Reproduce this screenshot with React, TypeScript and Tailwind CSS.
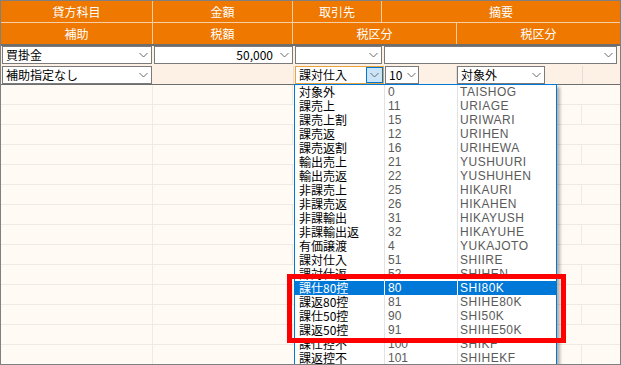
import React from "react";

const jp = { fontFamily: '"Noto Sans CJK JP", "Liberation Sans", sans-serif' };

const items: [string, string, string][] = [
  ["対象外", "0", "TAISHOG"],
  ["課売上", "11", "URIAGE"],
  ["課売上割", "15", "URIWARI"],
  ["課売返", "12", "URIHEN"],
  ["課売返割", "16", "URIHEWA"],
  ["輸出売上", "21", "YUSHUURI"],
  ["輸出売返", "22", "YUSHUHEN"],
  ["非課売上", "25", "HIKAURI"],
  ["非課売返", "26", "HIKAHEN"],
  ["非課輸出", "31", "HIKAYUSH"],
  ["非課輸出返", "32", "HIKAYUHE"],
  ["有価譲渡", "4", "YUKAJOTO"],
  ["課対仕入", "51", "SHIIRE"],
  ["課対仕返", "52", "SHIHEN"],
  ["課仕80控", "80", "SHI80K"],
  ["課返80控", "81", "SHIHE80K"],
  ["課仕50控", "90", "SHI50K"],
  ["課返50控", "91", "SHIHE50K"],
  ["課仕控不", "100", "SHIKF"],
  ["課返控不", "101", "SHIHEKF"],
];

function Chevron() {
  return (
    <svg width="9" height="6" viewBox="0 0 9 6" className="shrink-0">
      <polyline points="0.5,1 4.5,5 8.5,1" fill="none" stroke="#6b6b6b" strokeWidth="1" />
    </svg>
  );
}

function Combo({
  w,
  ml,
  text,
  right,
  focused,
}: {
  w: string;
  ml: string;
  text?: string;
  right?: boolean;
  focused?: boolean;
}) {
  return (
    <div
      className={`${w} ${ml} h-[18px] flex items-center bg-white border ${
        focused ? "border-[#e8a33c]" : "border-[#7a7a7a]"
      }`}
    >
      <span className={`flex-1 text-[12px] leading-none text-black px-[3px] whitespace-nowrap ${right ? "text-right" : ""}`}>
        {text}
      </span>
      {focused ? (
        <div className="w-[17px] h-full bg-[#cce4f7] border border-[#0078d7] flex items-center justify-center">
          <Chevron />
        </div>
      ) : (
        <div className="w-[16px] flex items-center justify-center">
          <Chevron />
        </div>
      )}
    </div>
  );
}

export default function App() {
  return (
    <div className="w-[621px] h-[365px] relative overflow-hidden border border-[#808080] bg-[#fffaf3]" style={jp}>
      {/* header */}
      <div className="flex h-[22px] bg-[#ee7800] text-white text-[12px] border-b border-[#f6cfa6]">
        <div className="w-[152px] flex items-center justify-center border-r border-[#f6cfa6]">貸方科目</div>
        <div className="w-[140px] flex items-center justify-center border-r border-[#f6cfa6]">金額</div>
        <div className="w-[89px] flex items-center justify-center border-r border-[#f6cfa6]">取引先</div>
        <div className="flex-1 flex items-center justify-center">摘要</div>
      </div>
      <div className="flex h-[21px] bg-[#ee7800] text-white text-[12px]">
        <div className="w-[152px] flex items-center justify-center border-r border-[#f6cfa6]">補助</div>
        <div className="w-[140px] flex items-center justify-center border-r border-[#f6cfa6]">税額</div>
        <div className="w-[164px] flex items-center justify-center border-r border-[#f6cfa6]">税区分</div>
        <div className="flex-1 flex items-center justify-center">税区分</div>
      </div>
      <div className="h-[2px] bg-[#6e6e6e]" />

      {/* input rows */}
      <div className="flex h-[19px] bg-[#fdf1e6]">
        <Combo w="w-[150px]" ml="ml-[1px]" text="買掛金" />
        <Combo w="w-[139px]" ml="ml-[2px]" text="50,000" right />
        <Combo w="w-[87px]" ml="ml-[2px]" />
        <Combo w="w-[233px]" ml="ml-[2px]" />
      </div>
      <div className="flex h-[19px] bg-[#fdf1e6] pt-[1px]">
        <Combo w="w-[150px]" ml="ml-[1px]" text="補助指定なし" />
        <div className="w-[142px] border-r border-[#e6ded6]" />
        <Combo w="w-[89px]" ml="ml-[1px]" text="課対仕入" focused />
        <Combo w="w-[34px]" ml="ml-[1px]" text="10" />
        <div className="w-[38px] border-r border-[#e6ded6]" />
        <Combo w="w-[88px]" ml="" text="対象外" />
        <div className="w-[38px] border-r border-[#e6ded6]" />
        <div className="flex-1" />
      </div>
      <div className="h-[1px] bg-[#6e6e6e]" />

      {/* body grid */}
      <div className="flex flex-col">
        {Array.from({ length: 14 }).map((_, i) => (
          <div key={i} className="flex h-[20px] border-b border-[#eeebe7]">
            <div className="w-[152px] border-r border-[#eeebe7]" />
            {i % 2 === 0 ? (
              <>
                <div className="w-[140px] border-r border-[#eeebe7]" />
                <div className="w-[89px] border-r border-[#eeebe7]" />
                <div className="flex-1" />
              </>
            ) : (
              <>
                <div className="w-[429px] border-r border-[#eeebe7]" />
                <div className="flex-1" />
              </>
            )}
          </div>
        ))}
      </div>

      {/* dropdown list */}
      <div className="absolute left-[293px] top-[83px] w-[263px] h-[300px] bg-white border border-[#0078d7] shadow-[3px_3px_3px_rgba(0,0,0,0.3)]">
        {items.map(([name, code, kana], i) => {
          const sel = i === 14;
          return (
            <div
              key={name}
              className={`flex h-[14px] text-[12px] leading-[14px] ${sel ? "bg-[#0078d7] text-white" : ""}`}
            >
              <div className={`w-[90px] pl-[4px] whitespace-nowrap border-r ${sel ? "border-white text-white" : "border-[#e3e3e3] text-black"}`}>
                {name}
              </div>
              <div
                className={`w-[73px] pl-[3px] border-r ${sel ? "border-white text-white" : "border-[#e3e3e3] text-[#5a5a5a]"}`}
                style={{ fontFamily: '"Liberation Sans", sans-serif' }}
              >
                {code}
              </div>
              <div
                className={`flex-1 pl-[2px] tracking-[0.5px] ${sel ? "text-white" : "text-[#5a5a5a]"}`}
                style={{ fontFamily: '"Liberation Sans", sans-serif' }}
              >
                {kana}
              </div>
            </div>
          );
        })}
      </div>

      {/* highlight */}
      <div className="absolute left-[286px] top-[273px] w-[279px] h-[69px] border-[5px] border-[#ff0000]" />
    </div>
  );
}
